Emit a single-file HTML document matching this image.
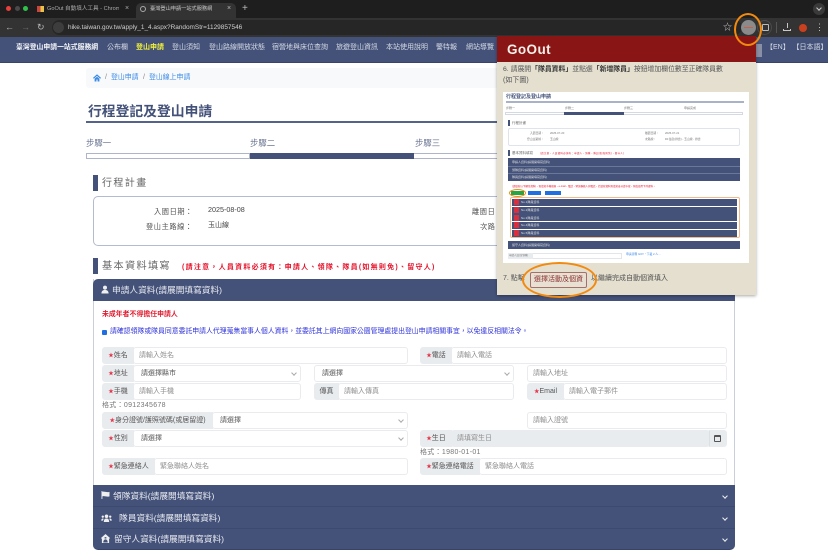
<!DOCTYPE html>
<html lang="zh-Hant">
<head>
<meta charset="utf-8">
<title>臺灣登山申請一站式服務網</title>
<style>
*{box-sizing:border-box;margin:0;padding:0}
html,body{width:828px;height:552px;overflow:hidden;background:#fff}
body{position:relative;font-family:"Liberation Sans","Noto Sans CJK TC",sans-serif;color:#555}
#w{position:absolute;left:0;top:0;width:828px;height:552px;overflow:hidden;filter:blur(.35px)}
.a{position:absolute;white-space:nowrap}
.nav{top:42px;font-size:7px;line-height:12px;color:#d5d9e3}
.lab{position:absolute;background:#e9ecef;border:1px solid #e9ecef;border-radius:3px 0 0 3px;height:17px;font-size:7px;line-height:15px;color:#555;text-align:center;white-space:nowrap}
.lab b{color:#e4364a;font-weight:400;font-size:5.5px}
.inp{position:absolute;background:#fff;border:1px solid #e9ebef;border-radius:3px;height:17px;font-size:7px;line-height:15px;color:#8f8f8f;padding-left:5px;white-space:nowrap}
.sel{color:#555}
.sel:after{content:"";position:absolute;right:4px;top:5px;width:3px;height:3px;border-right:1px solid #aaa;border-bottom:1px solid #aaa;transform:rotate(45deg)}
.bar{position:absolute;left:93px;width:642px;background:#44527a;color:#e8eaf0;font-size:8.7px;line-height:12px}
.chev{position:absolute;right:8px;width:4px;height:4px;border-right:1.5px solid #eee;border-bottom:1.5px solid #eee;transform:rotate(45deg)}
.mbar{position:absolute;left:9px;width:225px;height:7px;background:#44527a}
.m{position:absolute;white-space:nowrap}
</style>
</head>
<body>
<div id="w">
<!-- tab strip -->
<div class="a" style="left:0;top:0;width:828px;height:18px;background:#1e1e1e"></div>
<div class="a" style="left:6px;top:6px;width:5px;height:5px;border-radius:50%;background:#e9403c"></div>
<div class="a" style="left:15px;top:6px;width:5px;height:5px;border-radius:50%;background:#4a4a4a"></div>
<div class="a" style="left:23px;top:6px;width:5px;height:5px;border-radius:50%;background:#2fc24a"></div>
<div class="a" style="left:37px;top:6px;width:7px;height:6px;background:linear-gradient(90deg,#c9453f 50%,#e8c24a 50%)"></div>
<div class="a" style="left:47px;top:4px;font-size:5.6px;line-height:10px;color:#a9a9a9;width:72px;overflow:hidden">GoOut 自動填人工具 - Chrome</div>
<div class="a" style="left:125px;top:4px;font-size:7px;line-height:10px;color:#aaa">×</div>
<div class="a" style="left:136px;top:3px;width:100px;height:15px;background:#333;border-radius:5px 5px 0 0"></div>
<div class="a" style="left:140px;top:6px;width:6px;height:6px;border-radius:50%;border:1px solid #aaa"></div>
<div class="a" style="left:150px;top:4px;font-size:5.2px;line-height:10px;color:#c8c8c8">臺灣登山申請一站式服務網</div>
<div class="a" style="left:227px;top:4px;font-size:7px;line-height:10px;color:#bbb">×</div>
<div class="a" style="left:242px;top:2px;font-size:10px;line-height:13px;color:#bbb">+</div>
<div class="a" style="left:813px;top:3px;width:12px;height:12px;border-radius:50%;background:#3a3a3a"></div>
<div class="a" style="left:817px;top:6px;width:4px;height:4px;border-right:1px solid #ccc;border-bottom:1px solid #ccc;transform:rotate(45deg)"></div>
<!-- toolbar -->
<div class="a" style="left:0;top:18px;width:828px;height:19px;background:#333"></div>
<div class="a" style="left:5px;top:21px;font-size:9px;line-height:12px;color:#b5b5b5">←</div>
<div class="a" style="left:21px;top:21px;font-size:9px;line-height:12px;color:#6d6d6d">→</div>
<div class="a" style="left:37px;top:21px;font-size:9px;line-height:12px;color:#b5b5b5">↻</div>
<div class="a" style="left:52px;top:20px;width:690px;height:15px;border-radius:8px;background:#262626"></div>
<div class="a" style="left:53px;top:22px;width:11px;height:11px;border-radius:50%;background:#3d3d3d"></div>
<div class="a" style="left:68px;top:22px;font-size:6.45px;line-height:11px;color:#d0d0d0">hike.taiwan.gov.tw/apply_1_4.aspx?RandomStr=1129857546</div>
<div class="a" style="left:723px;top:22px;font-size:9px;line-height:11px;color:#c8c8c8">☆</div>
<div class="a" style="left:741px;top:20px;width:15px;height:15px;border-radius:50%;background:#8b8b8b"></div>
<div class="a" style="left:744px;top:27px;width:9px;height:1px;background:#c9604a"></div>
<div class="a" style="left:757px;top:20px;width:15px;height:15px;border-radius:50%;border:1px solid #4a4a4a"></div>
<div class="a" style="left:762px;top:24px;width:7px;height:7px;border:1px solid #bbb;border-radius:1px"></div>
<div class="a" style="left:776px;top:22px;width:1px;height:11px;background:#555"></div>
<div class="a" style="left:783px;top:29px;width:8px;height:2px;border:1px solid #c8c8c8;border-top:0"></div>
<div class="a" style="left:786.5px;top:23px;width:1px;height:5px;background:#c8c8c8"></div>
<div class="a" style="left:799px;top:24px;width:8px;height:8px;border-radius:50%;background:#c9401f"></div>
<div class="a" style="left:815px;top:22px;font-size:9px;line-height:11px;color:#c8c8c8">⋮</div>
<!-- site nav -->
<div class="a" style="left:0;top:37px;width:828px;height:26px;background:#44527a;border-bottom:1px solid #38446a"></div>
<div class="a nav" style="left:16px;color:#f4f5f8;font-weight:700;font-size:6.85px">臺灣登山申請一站式服務網</div>
<div class="a nav" style="left:107px">公布欄</div>
<div class="a nav" style="left:136px;color:#f0f03a;font-weight:700">登山申請</div>
<div class="a nav" style="left:172px">登山須知</div>
<div class="a nav" style="left:209px">登山路線開放狀態</div>
<div class="a nav" style="left:272px">宿營地與床位查詢</div>
<div class="a nav" style="left:336px">旅遊登山資訊</div>
<div class="a nav" style="left:386px">本站使用說明</div>
<div class="a nav" style="left:436px">警特報</div>
<div class="a nav" style="left:466px">網站導覽</div>
<div class="a" style="left:756px;top:44px;width:6px;height:13px;background:#8a90a3"></div>
<div class="a nav" style="left:766px">【EN】</div>
<div class="a nav" style="left:792.5px">【日本語】</div>
<!-- breadcrumb -->
<div class="a" style="left:86px;top:68px;width:650px;height:20px;background:#f8f9fa;border-radius:3px"></div>
<svg class="a" style="left:93px;top:73px" width="8" height="9" viewBox="0 0 10 10"><path d="M5 1 0 5.5 1 6.5 5 3l4 3.5 1-1zM2 6.500V10h2.300V7.500h1.400V10H8V6.500L5 4z" fill="#3a8ae8"/></svg>
<div class="a" style="left:105px;top:72px;font-size:7px;line-height:12px;color:#888">/</div>
<div class="a" style="left:111px;top:72px;font-size:6.9px;line-height:12px;color:#3a8ae8">登山申請</div>
<div class="a" style="left:143px;top:72px;font-size:7px;line-height:12px;color:#888">/</div>
<div class="a" style="left:149px;top:72px;font-size:6.9px;line-height:12px;color:#3a8ae8">登山線上申請</div>
<!-- title -->
<div class="a" style="left:88px;top:102px;font-size:13.8px;line-height:20px;color:#44527a;font-weight:700">行程登記及登山申請</div>
<div class="a" style="left:86px;top:121px;width:412px;height:1.5px;background:#55628a"></div>
<!-- steps -->
<div class="a" style="left:86px;top:137px;font-size:8.4px;line-height:13px;color:#6b7693">步驟一</div>
<div class="a" style="left:250px;top:137px;font-size:8.4px;line-height:13px;color:#6b7693">步驟二</div>
<div class="a" style="left:415px;top:137px;font-size:8.4px;line-height:13px;color:#6b7693">步驟三</div>
<div class="a" style="left:86px;top:153px;width:164px;height:6px;border:1px solid #aeb5c9;background:#fff"></div>
<div class="a" style="left:250px;top:153px;width:164px;height:6px;background:#44527a"></div>
<div class="a" style="left:414px;top:153px;width:84px;height:6px;border:1px solid #aeb5c9;border-left:0;background:#fff"></div>
<!-- section 1 -->
<div class="a" style="left:93px;top:175px;width:5px;height:16px;background:#44527a"></div>
<div class="a" style="left:102px;top:176px;font-size:10px;line-height:15px;color:#666;letter-spacing:1.4px">行程計畫</div>
<div class="a" style="left:93px;top:196px;width:420px;height:50px;border:1px solid #b4bbce;border-radius:5px;background:#fff"></div>
<div class="a" style="left:154px;top:206px;font-size:7.2px;line-height:12px;color:#555;letter-spacing:.6px">入園日期：</div>
<div class="a" style="left:146px;top:221px;font-size:7.2px;line-height:12px;color:#555;letter-spacing:.6px">登山主路線：</div>
<div class="a" style="left:208px;top:204px;font-size:7.2px;line-height:12px;color:#444">2025-08-08</div>
<div class="a" style="left:208px;top:220px;font-size:7px;line-height:12px;color:#444">玉山線</div>
<div class="a" style="left:472px;top:206px;font-size:7.2px;line-height:12px;color:#555;letter-spacing:.6px">離園日</div>
<div class="a" style="left:480px;top:221px;font-size:7.2px;line-height:12px;color:#555;letter-spacing:.6px">次路</div>
<!-- section 2 -->
<div class="a" style="left:93px;top:258px;width:5px;height:16px;background:#44527a"></div>
<div class="a" style="left:102px;top:259px;font-size:10.2px;line-height:15px;color:#666;letter-spacing:1.3px">基本資料填寫</div>
<div class="a" style="left:182px;top:262px;font-size:7px;line-height:11px;color:#e4142c;font-weight:700;letter-spacing:1.25px">(請注意，人員資料必須有：申請人、領隊、隊員(如無則免)、留守人)</div>
<!-- card -->
<div class="a" style="left:93px;top:279px;width:642px;height:264px;border:1px solid #c9cedb;border-width:0 1.5px;background:#fff"></div>
<div class="bar" style="top:279px;height:22px;border-radius:5px 5px 0 0"><span class="a" style="left:19px;top:5px">申請人資料(請展開填寫資料)</span>
<svg class="a" style="left:8px;top:6px" width="8" height="9" viewBox="0 0 10 10"><circle cx="5" cy="2.7" r="2.5" fill="#eee"/><path d="M.5 10c0-3 2-4.500 4.500-4.500S9.500 7 9.500 10z" fill="#eee"/></svg>
</div>
<div class="a" style="left:102px;top:309px;font-size:6.9px;line-height:12px;color:#e01c30;font-weight:700">未成年者不得擔任申請人</div>
<div class="a" style="left:102px;top:329.5px;width:5px;height:5px;background:#1f6fe0;border-radius:1px"></div>
<div class="a" style="left:110px;top:326px;font-size:6.87px;line-height:12px;color:#2e32d8">請確認領隊或隊員同意委託申請人代理蒐集當事人個人資料，並委託其上網向國家公園管理處提出登山申請相關事宜，以免違反相關法令。</div>
<!-- row 1 -->
<div class="lab" style="left:102px;top:347px;width:32px"><b>★</b>姓名</div>
<div class="inp" style="left:133px;top:347px;width:275px">請輸入姓名</div>
<div class="lab" style="left:420px;top:347px;width:32px"><b>★</b>電話</div>
<div class="inp" style="left:451px;top:347px;width:276px">請輸入電話</div>
<!-- row 2 -->
<div class="lab" style="left:102px;top:365px;width:32px"><b>★</b>地址</div>
<div class="inp sel" style="left:133px;top:365px;width:168px;padding-left:7px">請選擇縣市</div>
<div class="inp sel" style="left:314px;top:365px;width:200px;padding-left:7px">請選擇</div>
<div class="inp" style="left:527px;top:365px;width:200px">請輸入地址</div>
<!-- row 3 -->
<div class="lab" style="left:102px;top:383px;width:32px"><b>★</b>手機</div>
<div class="inp" style="left:133px;top:383px;width:168px">請輸入手機</div>
<div class="lab" style="left:314px;top:383px;width:25px">傳真</div>
<div class="inp" style="left:338px;top:383px;width:176px">請輸入傳真</div>
<div class="lab" style="left:527px;top:383px;width:37px"><b>★</b>Email</div>
<div class="inp" style="left:563px;top:383px;width:164px">請輸入電子郵件</div>
<div class="a" style="left:102px;top:400px;font-size:7px;line-height:11px;color:#777;letter-spacing:.3px">格式：0912345678</div>
<!-- row 4 -->
<div class="lab" style="left:102px;top:412px;width:111px"><b>★</b>身分證號/護照號碼(或居留證)</div>
<div class="inp sel" style="left:212px;top:412px;width:196px;padding-left:7px">請選擇</div>
<div class="inp" style="left:527px;top:412px;width:200px">請輸入證號</div>
<!-- row 5 -->
<div class="lab" style="left:102px;top:430px;width:32px"><b>★</b>性別</div>
<div class="inp sel" style="left:133px;top:430px;width:275px;padding-left:7px">請選擇</div>
<div class="lab" style="left:420px;top:430px;width:32px"><b>★</b>生日</div>
<div class="inp" style="left:451px;top:430px;width:259px;background:#e9ecef">請填寫生日</div>
<div class="lab" style="left:709px;top:430px;width:18px;border-radius:0 3px 3px 0;border-left-color:#dcdfe4"></div>
<div class="a" style="left:714px;top:435px;width:7px;height:7px;border:1px solid #555;border-top-width:2px;border-radius:1px"></div>
<div class="a" style="left:420px;top:447px;font-size:7px;line-height:11px;color:#777;letter-spacing:.3px">格式：1980-01-01</div>
<!-- row 6 -->
<div class="lab" style="left:102px;top:458px;width:53px"><b>★</b>緊急連絡人</div>
<div class="inp" style="left:154px;top:458px;width:254px">緊急聯絡人姓名</div>
<div class="lab" style="left:420px;top:458px;width:60px"><b>★</b>緊急連絡電話</div>
<div class="inp" style="left:479px;top:458px;width:248px">緊急聯絡人電話</div>
<!-- collapsed bars -->
<div class="bar" style="top:485px;height:65px;border-radius:0 0 5px 5px;border-bottom:1px solid #37436a">
<div class="a" style="left:0;top:21px;width:642px;height:1px;background:#3d4a70"></div>
<div class="a" style="left:0;top:43px;width:642px;height:1px;background:#3d4a70"></div>
<span class="a" style="left:20px;top:5px">領隊資料(請展開填寫資料)</span>
<span class="a" style="left:26px;top:27px">隊員資料(請展開填寫資料)</span>
<span class="a" style="left:21px;top:48px">留守人資料(請展開填寫資料)</span>
<svg class="a" style="left:8px;top:6px" width="9" height="8" viewBox="0 0 10 9"><path d="M.5 0h1v9h-1zM1.5 1C4 0 6 2 9.5 1v5C6 7 4 5 1.5 6z" fill="#eee"/></svg>
<svg class="a" style="left:8px;top:29px" width="11" height="8" viewBox="0 0 12 9"><circle cx="6" cy="2.5" r="2" fill="#eee"/><circle cx="1.8" cy="3" r="1.3" fill="#eee"/><circle cx="10.2" cy="3" r="1.3" fill="#eee"/><path d="M3 9c0-3 1.200-4 3-4s3 1 3 4zM0 7.500C0 6 .8 5 2 5l.8.300L2 7.500zM12 7.500C12 6 11.200 5 10 5l-.8.300.8 2.200z" fill="#eee"/></svg>
<svg class="a" style="left:8px;top:49px" width="9" height="9" viewBox="0 0 10 10"><path d="M5 0 0 4.500l.6.800L1 5v5h8V5l.4.300.6-.8zM4 3.500h2V5H4zM2.500 9.500C2.500 7.500 3.500 6 5 6s2.500 1.500 2.500 3.500z" fill="#eee"/></svg>
<i class="chev" style="top:8.5px"></i><i class="chev" style="top:30.5px"></i><i class="chev" style="top:51.5px"></i>
</div>
<!-- popup -->
<div class="a" style="left:497px;top:36px;width:259px;height:259px;background:#e4dfcf;box-shadow:0 1px 3px rgba(0,0,0,.35)"></div>
<div class="a" style="left:497px;top:36px;width:259px;height:26px;background:#8a1515"></div>
<div class="a" style="left:507px;top:41px;font-size:13.5px;line-height:17px;font-weight:700;color:#f6f0ea;letter-spacing:.4px">GoOut</div>
<div class="a" style="left:503px;top:64px;font-size:6.85px;line-height:12px;color:#555">6. 請展開<b style="color:#333">「隊員資料」</b>並點選<b style="color:#333">「新增隊員」</b>按鈕增加欄位數至正確隊員數</div>
<div class="a" style="left:503px;top:75px;font-size:7px;line-height:12px;color:#555">(如下圖)</div>
<!-- screenshot in popup -->
<div class="a" style="left:503px;top:92px;width:246px;height:171px;background:#fff;overflow:hidden">
  <div class="m" style="left:3px;top:1px;font-size:5px;line-height:9px;color:#44527a;font-weight:700">行程登記及登山申請</div>
  <div class="m" style="left:3px;top:9px;width:238px;height:2px;background:#aab2c8"></div>
  <div class="m" style="left:3px;top:14px;font-size:3px;line-height:5px;color:#777">步驟一</div>
  <div class="m" style="left:62px;top:14px;font-size:3px;line-height:5px;color:#777">步驟二</div>
  <div class="m" style="left:121px;top:14px;font-size:3px;line-height:5px;color:#777">步驟三</div>
  <div class="m" style="left:181px;top:14px;font-size:3px;line-height:5px;color:#777">申請完成</div>
  <div class="m" style="left:2px;top:20px;width:238px;height:3px;border:1px solid #d5d9e3"></div>
  <div class="m" style="left:61px;top:20px;width:60px;height:3px;background:#44527a"></div>
  <div class="m" style="left:5px;top:28px;width:2px;height:6px;background:#44527a"></div>
  <div class="m" style="left:9px;top:28px;font-size:3.5px;line-height:6px;color:#666">行程計畫</div>
  <div class="m" style="left:5px;top:36px;width:232px;height:18px;border:1px solid #dfe3ea;border-radius:2px"></div>
  <div class="m" style="left:27px;top:39px;font-size:2.8px;line-height:4px;color:#777">入園日期：</div>
  <div class="m" style="left:47px;top:39px;font-size:2.8px;line-height:4px;color:#777">2025-07-20</div>
  <div class="m" style="left:142px;top:39px;font-size:2.8px;line-height:4px;color:#777">離園日期：</div>
  <div class="m" style="left:162px;top:39px;font-size:2.8px;line-height:4px;color:#777">2025-07-21</div>
  <div class="m" style="left:24px;top:45px;font-size:2.8px;line-height:4px;color:#777">登山主路線：</div>
  <div class="m" style="left:47px;top:45px;font-size:2.8px;line-height:4px;color:#777">玉山線</div>
  <div class="m" style="left:142px;top:45px;font-size:2.8px;line-height:4px;color:#777">次路線：</div>
  <div class="m" style="left:162px;top:45px;font-size:2.8px;line-height:4px;color:#777">D1住宿(排雲) - 玉山線 - 排雲</div>
  <div class="m" style="left:5px;top:58px;width:2px;height:6px;background:#44527a"></div>
  <div class="m" style="left:9px;top:58px;font-size:3.5px;line-height:6px;color:#666">基本資料填寫</div>
  <div class="m" style="left:37px;top:59px;font-size:2.5px;line-height:5px;color:#e4142c;letter-spacing:.25px">(請注意，人員資料必須有：申請人、領隊、隊員(如無則免)、留守人)</div>
  <div class="m" style="left:5px;top:66px;width:232px;height:23px;background:#44527a"></div>
  <div class="m" style="left:5px;top:74px;width:232px;height:1px;background:#6a769a"></div>
  <div class="m" style="left:5px;top:81px;width:232px;height:1px;background:#6a769a"></div>
  <div class="m" style="left:9px;top:67px;font-size:3px;line-height:6px;color:#ddd">申請人資料(請展開填寫資料)</div>
  <div class="m" style="left:9px;top:75px;font-size:3px;line-height:6px;color:#ddd">領隊資料(請展開填寫資料)</div>
  <div class="m" style="left:9px;top:82px;font-size:3px;line-height:6px;color:#ddd">隊員資料(請展開填寫資料)</div>
  <div class="m" style="left:9px;top:91.5px;font-size:2.5px;line-height:5px;color:#e4142c">(請填寫以下欄位資料)，需填寫手機號碼、e-mail、電話、緊急聯絡人與電話，若填寫資料需填寫身分證字號，預設使用下列資料。</div>
  <div class="m" style="left:8px;top:99px;width:13px;height:4px;background:#26a544"></div>
  <div class="m" style="left:6px;top:97px;width:17px;height:8px;border:1px solid #f08c1a;border-radius:50%"></div>
  <div class="m" style="left:25px;top:99px;width:13px;height:4px;background:#1f6fe0"></div>
  <div class="m" style="left:42px;top:99px;width:16px;height:4px;background:#1f6fe0"></div>
  <div class="m" style="left:7px;top:105px;width:230px;height:41px;border:1px solid #f2b98a;border-radius:2px"></div>
  <div class="mbar" style="top:106.5px"></div>
  <div class="mbar" style="top:114.5px"></div>
  <div class="mbar" style="top:122px"></div>
  <div class="mbar" style="top:129.5px"></div>
  <div class="mbar" style="top:137.5px"></div>
  <div class="m" style="left:11px;top:107px;width:5px;height:6px;background:#d9303f"></div>
  <div class="m" style="left:11px;top:115px;width:5px;height:6px;background:#d9303f"></div>
  <div class="m" style="left:11px;top:122.5px;width:5px;height:6px;background:#d9303f"></div>
  <div class="m" style="left:11px;top:130px;width:5px;height:6px;background:#d9303f"></div>
  <div class="m" style="left:11px;top:138px;width:5px;height:6px;background:#d9303f"></div>
  <div class="m" style="left:18px;top:107px;font-size:3px;line-height:6px;color:#ddd">No.1隊員資料</div>
  <div class="m" style="left:18px;top:115px;font-size:3px;line-height:6px;color:#ddd">No.2隊員資料</div>
  <div class="m" style="left:18px;top:122.5px;font-size:3px;line-height:6px;color:#ddd">No.3隊員資料</div>
  <div class="m" style="left:18px;top:130px;font-size:3px;line-height:6px;color:#ddd">No.4隊員資料</div>
  <div class="m" style="left:18px;top:138px;font-size:3px;line-height:6px;color:#ddd">No.5隊員資料</div>
  <div class="m" style="left:5px;top:149px;width:232px;height:8px;background:#44527a"></div>
  <div class="m" style="left:9px;top:150px;font-size:3px;line-height:6px;color:#ddd">留守人資料(請展開填寫資料)</div>
  <div class="m" style="left:5px;top:161px;width:114px;height:6px;border:1px solid #e3e5ea"></div>
  <div class="m" style="left:5px;top:161px;width:25px;height:6px;background:#e9ecef;font-size:2.5px;line-height:6px;color:#777;padding-left:1px">申請人員(含領隊)</div>
  <div class="m" style="left:123px;top:160px;font-size:2.8px;line-height:5px;color:#3a8ae8">申請流程 GO!!・下載 2.人…</div>
</div>
<div class="a" style="left:503px;top:273px;font-size:7px;line-height:12px;color:#555">7. 點擊</div>
<div class="a" style="left:530px;top:272px;width:57px;height:16px;border:1px solid #a3706a;border-radius:2px;background:#e8e0d2;font-size:7px;line-height:14px;color:#8a3030;text-align:center">選擇活動及個資</div>
<div class="a" style="left:591px;top:273px;font-size:7px;line-height:12px;color:#555">以繼續完成自動個資填入</div>
<!-- highlight rings -->
<div class="a" style="left:522px;top:262px;width:75px;height:36px;border:2px solid #f28a10;border-radius:50%"></div>
<div class="a" style="left:734px;top:13px;width:28px;height:33px;border:2px solid #f28a10;border-radius:50%"></div>
</div>
</body>
</html>
